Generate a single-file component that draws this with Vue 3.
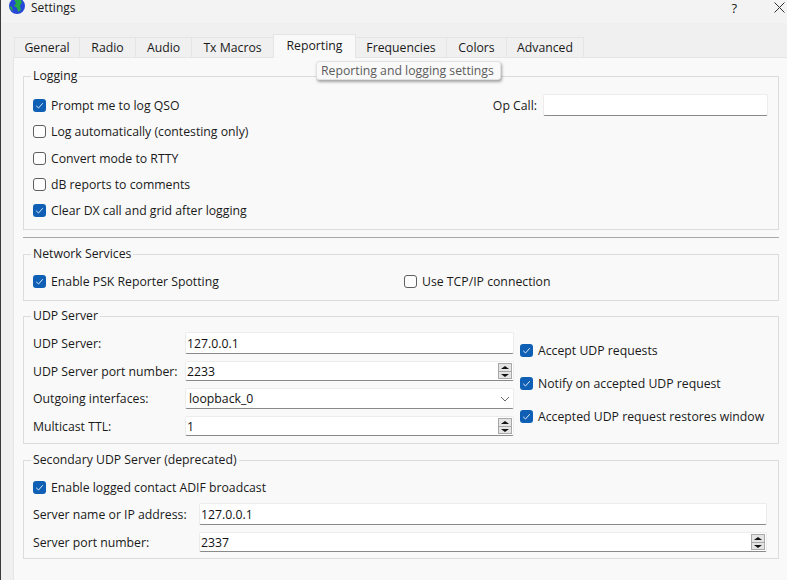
<script setup>
const tabs = [
  { name: "General", width: 66 },
  { name: "Radio", width: 57 },
  { name: "Audio", width: 57 },
  { name: "Tx Macros", width: 83 },
  { name: "Reporting", width: 83 },
  { name: "Frequencies", width: 92 },
  { name: "Colors", width: 61 },
  { name: "Advanced", width: 78 },
];
const activeTab = "Reporting";

const loggingChecks = [
  { label: "Prompt me to log QSO", checked: true },
  { label: "Log automatically (contesting only)", checked: false },
  { label: "Convert mode to RTTY", checked: false },
  { label: "dB reports to comments", checked: false },
  { label: "Clear DX call and grid after logging", checked: true },
];

const udpChecks = ["Accept UDP requests", "Notify on accepted UDP request", "Accepted UDP request restores window"];
</script>

<template>
  <div class="dialog">
    <header class="titlebar">
      <svg class="app-icon" viewBox="0 0 16 16" aria-hidden="true">
        <circle cx="8" cy="7" r="8" fill="#2546d8" />
        <path d="M5 0.5 L11 0 L13 3 L11 7 L12 11 L9 13 L8 9 L5 7 L7 4 Z" fill="#25a84a" />
        <path d="M0.5 7 L3 8 L4 12 L2 11 Z" fill="#25a84a" />
      </svg>
      <span class="title">Settings</span>
      <span class="help">?</span>
      <svg class="close" viewBox="0 0 11 11" aria-hidden="true">
        <path d="M0.5 0.5 L10.5 10.5 M10.5 0.5 L0.5 10.5" stroke="#333" stroke-width="1" fill="none" />
      </svg>
    </header>

    <div class="content">
      <nav class="tabs">
        <div
          v-for="tab in tabs"
          :key="tab.name"
          class="tab"
          :class="{ active: tab.name === activeTab }"
          :style="{ width: tab.width + 'px' }"
        >
          {{ tab.name }}
        </div>
      </nav>

      <div class="pane">
        <div class="tooltip">Reporting and logging settings</div>

        <fieldset class="group logging">
          <legend>Logging</legend>
          <div class="logging-body">
            <div class="check-list">
              <label v-for="item in loggingChecks" :key="item.label" class="check">
                <span class="box" :class="{ on: item.checked }">
                  <svg v-if="item.checked" viewBox="0 0 13 13" aria-hidden="true">
                    <path d="M3.2 6.8 L5.5 9 L9.8 4.2" />
                  </svg>
                </span>
                {{ item.label }}
              </label>
            </div>
            <div class="op-call">
              <span>Op Call:</span>
              <div class="field"></div>
            </div>
          </div>
        </fieldset>

        <div class="divider"></div>

        <fieldset class="group network">
          <legend>Network Services</legend>
          <div class="network-body">
            <label class="check psk">
              <span class="box on">
                <svg viewBox="0 0 13 13" aria-hidden="true"><path d="M3.2 6.8 L5.5 9 L9.8 4.2" /></svg>
              </span>
              Enable PSK Reporter Spotting
            </label>
            <label class="check">
              <span class="box"></span>
              Use TCP/IP connection
            </label>
          </div>
        </fieldset>

        <fieldset class="group udp">
          <legend>UDP Server</legend>
          <div class="udp-body">
            <div class="udp-form">
              <span>UDP Server:</span>
              <div class="field h-22">127.0.0.1</div>
              <span>UDP Server port number:</span>
              <div class="field spin h-20">
                2233
                <span class="spinner"><i class="up"></i><i class="down"></i></span>
              </div>
              <span>Outgoing interfaces:</span>
              <div class="field combo h-21">
                loopback_0
                <svg viewBox="0 0 10 6" aria-hidden="true"><path d="M1 1 L5 5 L9 1" /></svg>
              </div>
              <span>Multicast TTL:</span>
              <div class="field spin h-20">
                1
                <span class="spinner"><i class="up"></i><i class="down"></i></span>
              </div>
            </div>
            <div class="udp-checks">
              <label v-for="label in udpChecks" :key="label" class="check">
                <span class="box on">
                  <svg viewBox="0 0 13 13" aria-hidden="true"><path d="M3.2 6.8 L5.5 9 L9.8 4.2" /></svg>
                </span>
                {{ label }}
              </label>
            </div>
          </div>
        </fieldset>

        <fieldset class="group secondary">
          <legend>Secondary UDP Server (deprecated)</legend>
          <label class="check adif">
            <span class="box on">
              <svg viewBox="0 0 13 13" aria-hidden="true"><path d="M3.2 6.8 L5.5 9 L9.8 4.2" /></svg>
            </span>
            Enable logged contact ADIF broadcast
          </label>
          <div class="secondary-form">
            <span>Server name or IP address:</span>
            <div class="field h-22">127.0.0.1</div>
            <span>Server port number:</span>
            <div class="field spin h-20">
              2337
              <span class="spinner"><i class="up"></i><i class="down"></i></span>
            </div>
          </div>
        </fieldset>
      </div>
    </div>
  </div>
</template>

<style scoped>
.dialog {
  width: 787px;
  height: 580px;
  overflow: hidden;
  background: #f0f0f0;
  border-left: 1px solid #3a3a3a;
  box-sizing: border-box;
  font-family: "Open Sans", "Noto Sans", sans-serif;
  font-size: 12.25px;
  color: #1a1a1a;
}

.titlebar {
  display: flex;
  align-items: center;
  height: 23px;
  background: #f3f3f3;
  position: relative;
}

.app-icon {
  width: 16px;
  height: 16px;
  margin: -9px 0 0 8px;
}

.title {
  margin: -8px 0 0 6px;
  font-size: 12px;
}

.help {
  margin: -8px 0 0 auto;
  font-size: 13px;
}

.close {
  width: 11px;
  height: 11px;
  margin: -8px 2px 0 37px;
}

.content {
  padding: 11px 0 0 12px;
}

.tabs {
  display: flex;
  align-items: flex-end;
  height: 24px;
  padding-left: 1px;
}

.tab {
  height: 21px;
  line-height: 20px;
  text-align: center;
  background: #f0f0f0;
  border: 1px solid #e5e5e5;
  border-bottom: none;
  box-sizing: border-box;
  margin-right: -1px;
}

.tab.active {
  height: 24px;
  line-height: 21px;
  background: #f9f9f9;
  position: relative;
  z-index: 1;
}

.pane {
  position: relative;
  height: 560px;
  background: #f9f9f9;
  border: 1px solid #e5e5e5;
  border-right: none;
  padding: 11px 8px 0 9px;
  margin-top: -1px;
}

.tooltip {
  position: absolute;
  left: 302px;
  top: 3px;
  width: 185px;
  height: 19px;
  line-height: 18px;
  box-sizing: border-box;
  padding-left: 4px;
  background: #f9f9f9;
  border: 1px solid #e2e2e2;
  border-radius: 3px;
  box-shadow: 1px 2px 3px rgba(0, 0, 0, 0.35);
  color: #5c5c5c;
  z-index: 2;
  white-space: nowrap;
}

.group {
  margin: 0;
  min-width: 0;
  border: 1px solid #dcdcdc;
  padding: 0 10px 0 9px;
}

legend {
  margin-left: -2px;
  padding: 0 2px;
  line-height: 16px;
}

.logging {
  height: 160px;
  margin-top: -1px;
}

.logging-body {
  display: flex;
  justify-content: space-between;
  align-items: flex-start;
  padding-top: 10px;
}

.check-list {
  display: flex;
  flex-direction: column;
  gap: 9.25px;
  margin-top: 3px;
}

.check {
  display: flex;
  align-items: center;
  gap: 5px;
  height: 17px;
  white-space: nowrap;
}

.box {
  width: 13px;
  height: 13px;
  flex: none;
  box-sizing: border-box;
  border: 1px solid #5f5f5f;
  border-radius: 3px;
  background: #fdfdfd;
}

.box.on {
  border: none;
  background: #0f5fb5;
}

.box svg {
  display: block;
  width: 13px;
  height: 13px;
}

.box path {
  fill: none;
  stroke: #dbe8f6;
  stroke-width: 1;
}

.op-call {
  display: flex;
  align-items: center;
  gap: 6px;
}

.op-call .field {
  width: 225px;
  height: 22px;
}

.field {
  position: relative;
  box-sizing: border-box;
  padding-left: 1px;
  background: #fff;
  border: 1px solid #ececec;
  border-bottom: 1px solid #8a8a8a;
  border-radius: 2px;
  display: flex;
  align-items: center;
  color: #111;
}

.h-22 {
  height: 22px;
}

.h-21 {
  height: 21px;
}

.h-20 {
  height: 20px;
}

.divider {
  height: 1px;
  margin: 7px 0 0;
  background: #a8a8a8;
}

.network {
  height: 53px;
  margin-top: 8px;
}

.network-body {
  display: flex;
  padding-top: 11px;
}

.psk {
  width: 371px;
}

.udp {
  height: 134px;
  margin-top: 7px;
}

.udp-body {
  display: flex;
  gap: 6px;
  padding-top: 8px;
}

.udp-form {
  display: grid;
  grid-template-columns: 152px 329px;
  row-gap: 7px;
  align-items: center;
}

.udp-checks {
  display: flex;
  flex-direction: column;
  gap: 16px;
  padding-top: 10px;
}

.combo {
  padding-left: 3px;
  justify-content: space-between;
}

.combo svg {
  width: 10px;
  height: 6px;
  margin-right: 3px;
}

.combo path {
  fill: none;
  stroke: #666;
  stroke-width: 1;
}

.spinner {
  position: absolute;
  right: 1px;
  top: 1px;
  width: 14px;
  height: 16px;
  display: flex;
  flex-direction: column;
  box-sizing: border-box;
  border: 1px solid #a8a8a8;
  background: #e4e4e4;
}

.spinner i {
  flex: 1;
  position: relative;
}

.spinner .up {
  border-bottom: 1px solid #a8a8a8;
}

.spinner i::after {
  content: "";
  position: absolute;
  left: 2px;
  top: 2px;
  border-left: 4px solid transparent;
  border-right: 4px solid transparent;
}

.spinner .up::after {
  border-bottom: 3px solid #111;
}

.spinner .down::after {
  border-top: 3px solid #111;
}

.secondary {
  height: 105px;
  margin-top: 8px;
}

.adif {
  margin-top: 11px;
}

.secondary-form {
  display: grid;
  grid-template-columns: 166px 568px;
  row-gap: 7px;
  align-items: center;
  margin-top: 7px;
}
</style>
